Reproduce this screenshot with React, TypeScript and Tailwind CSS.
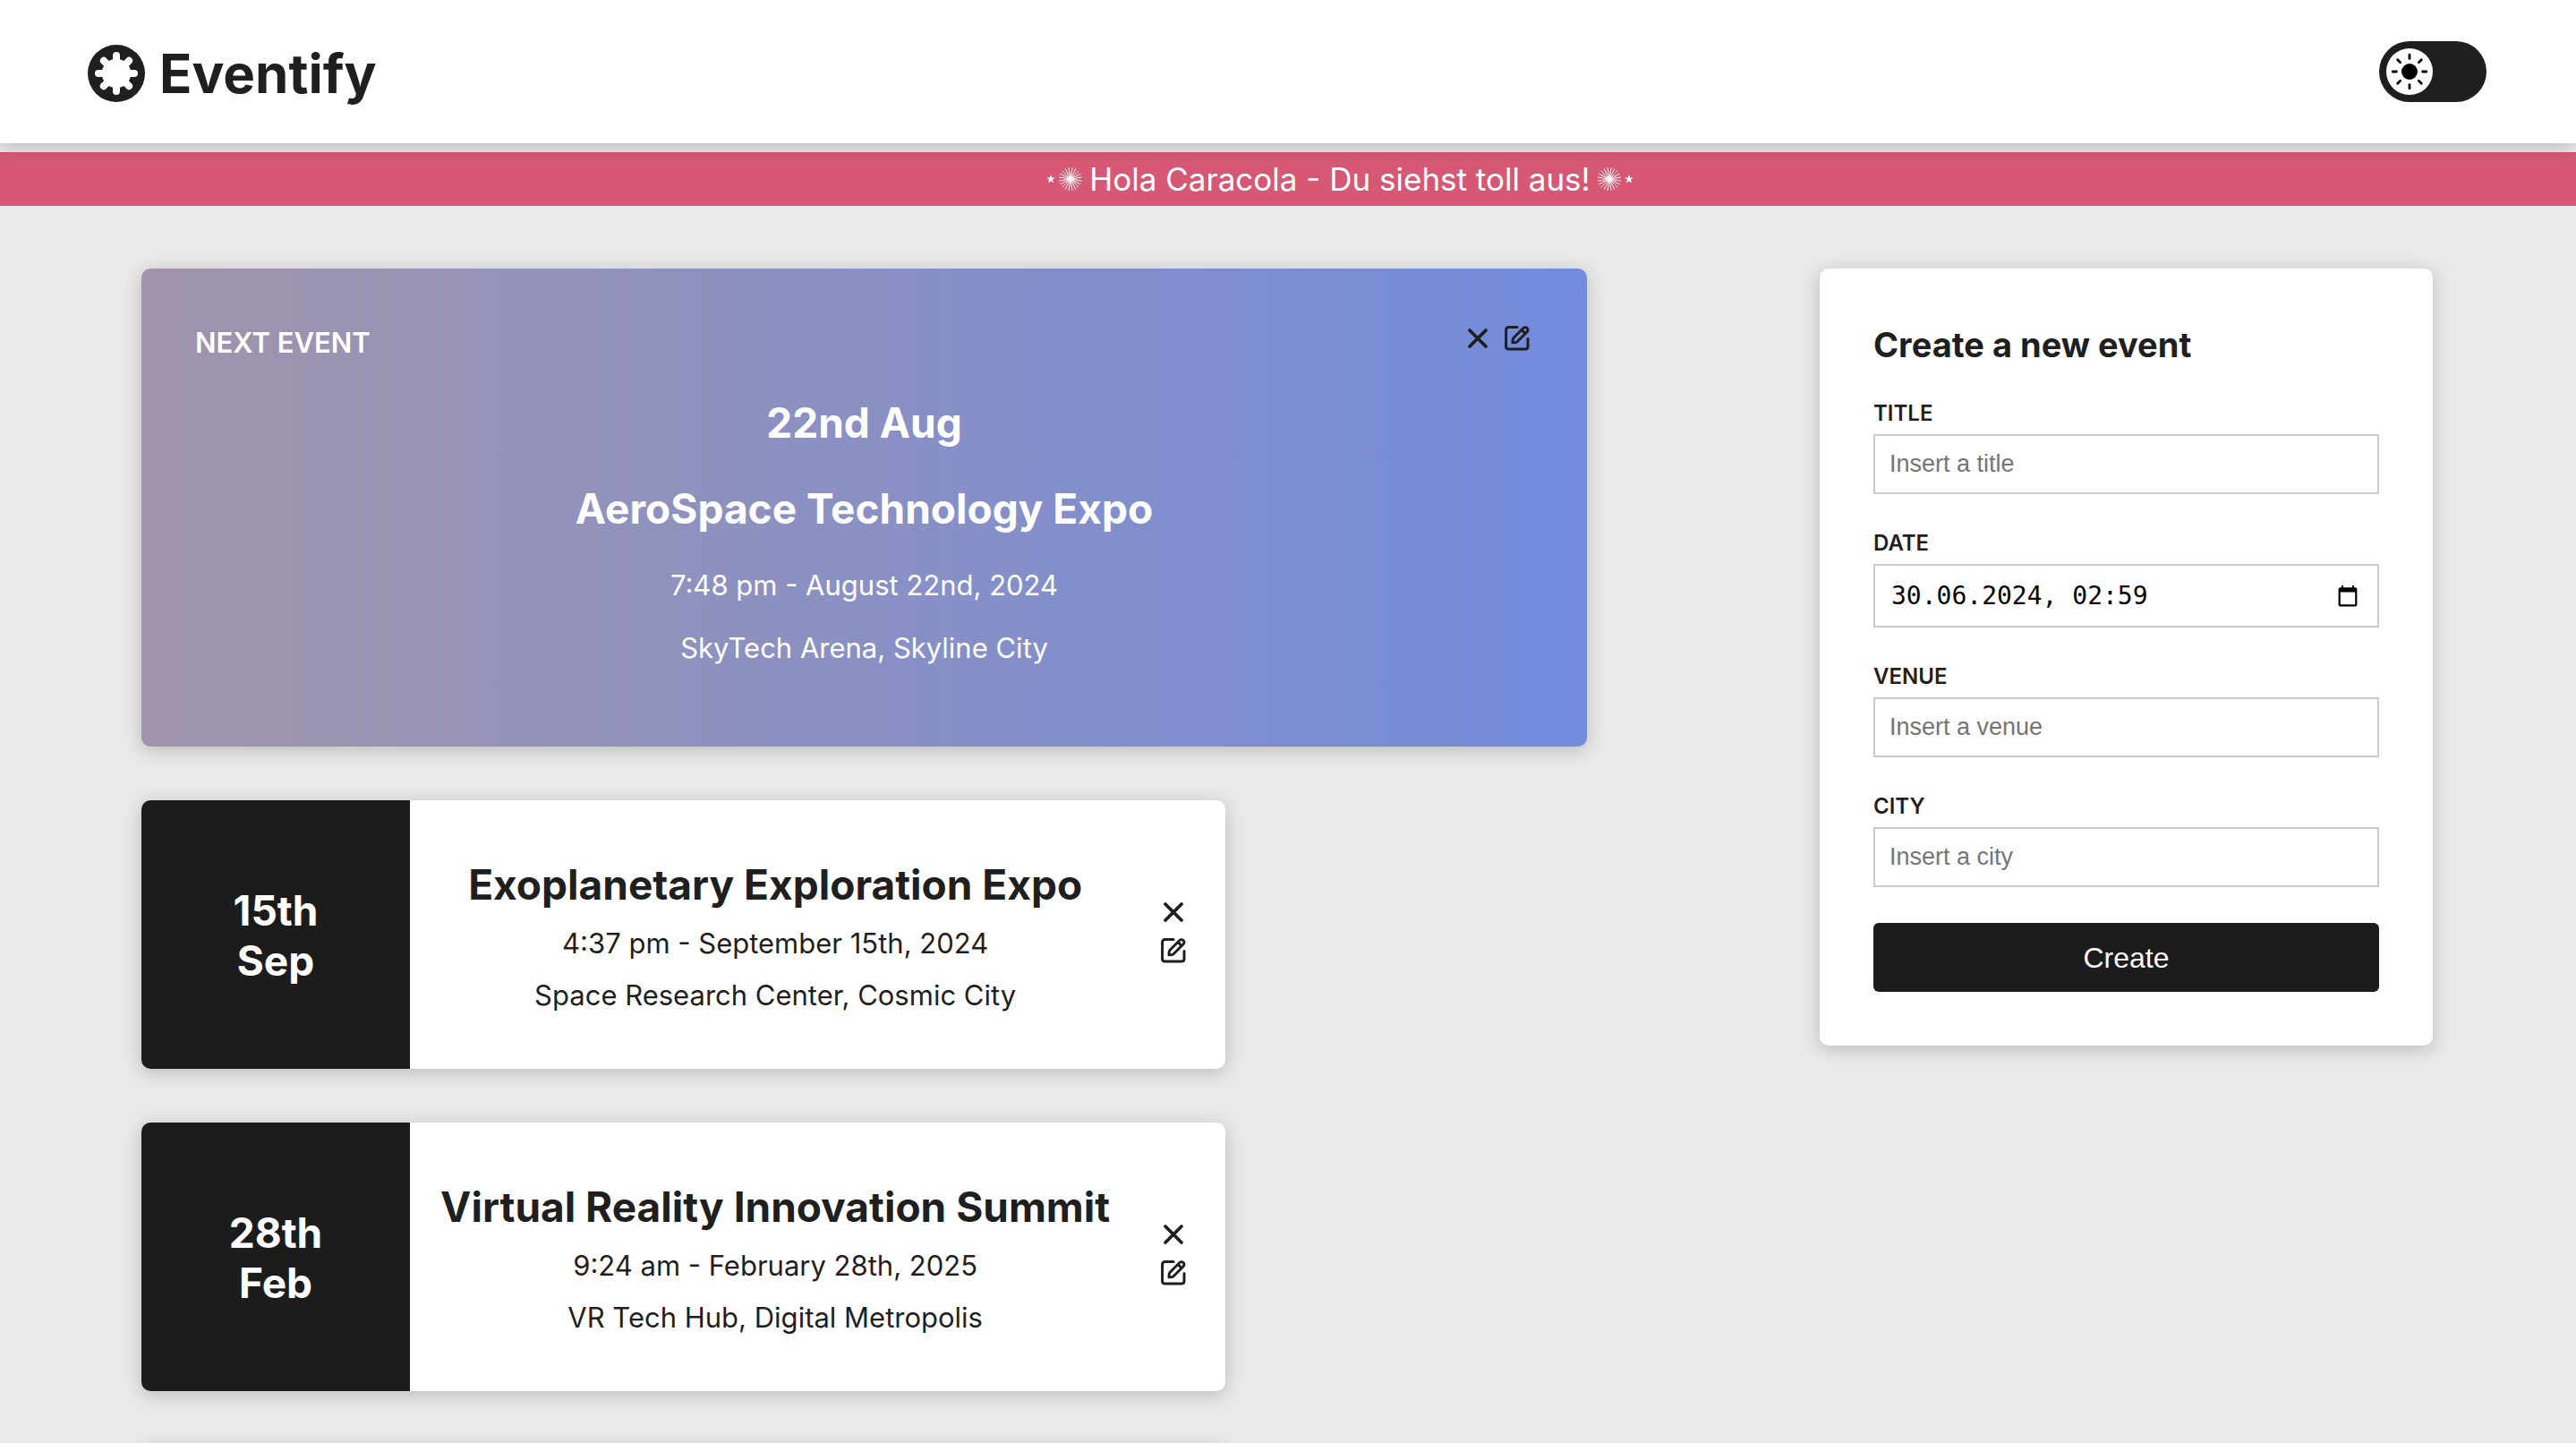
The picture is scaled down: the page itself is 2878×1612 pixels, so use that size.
import type { ReactNode } from "react";

type EventItem = {
  day: string;
  month: string;
  title: string;
  when: string;
  where: string;
};

const EVENTS: EventItem[] = [
  {
    day: "15th",
    month: "Sep",
    title: "Exoplanetary Exploration Expo",
    when: "4:37 pm - September 15th, 2024",
    where: "Space Research Center, Cosmic City",
  },
  {
    day: "28th",
    month: "Feb",
    title: "Virtual Reality Innovation Summit",
    when: "9:24 am - February 28th, 2025",
    where: "VR Tech Hub, Digital Metropolis",
  },
];

const RAYS_8 = [0, 45, 90, 135, 180, 225, 270, 315];
const RAYS_20 = Array.from({ length: 20 }, (_, i) => i * 18);

function LogoMark() {
  return (
    <svg viewBox="0 0 64 64" className="size-16 shrink-0" aria-hidden="true">
      <circle cx="32" cy="32" r="32" fill="#1f1f1f" />
      <circle cx="32" cy="32" r="16.2" fill="#fff" />
      {RAYS_8.map((a) => (
        <line
          key={a}
          x1="32"
          y1="32"
          x2="32"
          y2="12"
          stroke="#fff"
          strokeWidth="8"
          strokeLinecap="round"
          transform={`rotate(${a} 32 32)`}
        />
      ))}
    </svg>
  );
}

function SunIcon() {
  return (
    <svg viewBox="0 0 52 52" className="size-[52px]" aria-hidden="true">
      <circle cx="26" cy="26" r="26" fill="#fff" />
      <circle cx="26" cy="26" r="9" fill="#000" />
      {RAYS_8.map((a) => (
        <line
          key={a}
          x1="26"
          y1="11.4"
          x2="26"
          y2="7.2"
          stroke="#000"
          strokeWidth="2.8"
          strokeLinecap="round"
          transform={`rotate(${a} 26 26)`}
        />
      ))}
    </svg>
  );
}

function Burst() {
  return (
    <svg viewBox="0 0 26 26" className="size-[26px]" aria-hidden="true">
      <circle cx="13" cy="13" r="2.4" fill="#fff" />
      {RAYS_20.map((a) => (
        <line
          key={a}
          x1="13"
          y1="13"
          x2="13"
          y2="0"
          stroke="#fff"
          strokeWidth="0.9"
          transform={`rotate(${a + 9} 13 13)`}
        />
      ))}
    </svg>
  );
}

function Star() {
  return (
    <svg viewBox="0 0 10 10" className="size-[10px]" aria-hidden="true">
      <path
        d="M5 0 L6.2 3.5 L9.8 3.6 L6.9 5.8 L8 9.3 L5 7.2 L2 9.3 L3.1 5.8 L0.2 3.6 L3.8 3.5 Z"
        fill="#fff"
      />
    </svg>
  );
}

function CloseIcon() {
  return (
    <svg viewBox="0 0 36 36" className="size-9" aria-hidden="true">
      <path
        d="M9 9 L27 27 M27 9 L9 27"
        stroke="#1f1f1f"
        strokeWidth="3.8"
        strokeLinecap="round"
      />
    </svg>
  );
}

function EditIcon() {
  return (
    <svg viewBox="0 0 36 36" className="size-9" fill="none" aria-hidden="true">
      <g
        stroke="#1f1f1f"
        strokeWidth="3"
        strokeLinecap="round"
        strokeLinejoin="round"
      >
        <path d="M18 5.6 H8.6 Q5.6 5.6 5.6 8.6 V27 Q5.6 30 8.6 30 H27 Q30 30 30 27 V18.4" />
        <path d="M13 22.8 L13.2 19.4 Q13.3 18.2 14.2 17.3 L24.9 6.5 a2.9 2.9 0 0 1 4.2 4.2 L18.3 21.5 Q17.5 22.3 16.4 22.5 Z" />
        <path d="M23.2 8.6 L27 12.4" />
      </g>
    </svg>
  );
}

function CalendarIcon() {
  return (
    <svg viewBox="0 0 22 24" className="h-6 w-[22px]" aria-hidden="true">
      <path
        fill="#000"
        fillRule="evenodd"
        d="M4 0 H6 V2.2 H16 V0 H18 V2.2 H19.4 Q21.4 2.2 21.4 4.2 V21.4 Q21.4 23.4 19.4 23.4 H2.6 Q0.6 23.4 0.6 21.4 V4.2 Q0.6 2.2 2.6 2.2 H4 Z M2.8 7.6 V21.2 H19.2 V7.6 Z"
      />
    </svg>
  );
}

function EventActions() {
  return (
    <>
      <button type="button" aria-label="Delete event">
        <CloseIcon />
      </button>
      <button type="button" aria-label="Edit event">
        <EditIcon />
      </button>
    </>
  );
}

function Card({ className, children }: { className: string; children?: ReactNode }) {
  return (
    <div
      className={`overflow-hidden rounded-[10px] shadow-[0_4px_20px_rgba(0,0,0,0.2)] ${className}`}
    >
      {children}
    </div>
  );
}

function NextEvent() {
  return (
    <Card className="bg-linear-to-r from-[#a094ab] to-[#728bdc] px-[60px] pt-[60px] pb-[90px] text-white">
      <div className="flex items-start justify-between">
        <h2 className="pt-[2px] text-[31px] leading-[42px] font-semibold">NEXT EVENT</h2>
        <div className="flex gap-2">
          <EventActions />
        </div>
      </div>
      <div className="flex flex-col items-center text-center">
        <p className="mt-10 text-[46px] leading-[56px] font-bold">22nd Aug</p>
        <h3 className="mt-10 text-[46px] leading-[56px] font-bold">
          AeroSpace Technology Expo
        </h3>
        <p className="mt-[38px] text-[31px] leading-10">7:48 pm - August 22nd, 2024</p>
        <p className="mt-[30px] text-[31px] leading-10">SkyTech Arena, Skyline City</p>
      </div>
    </Card>
  );
}

function EventCard({ event }: { event: EventItem }) {
  return (
    <Card className="flex min-h-[300px] w-3/4 bg-white">
      <div className="flex w-[300px] shrink-0 flex-col items-center justify-center bg-[#1c1c1c] pt-[2px] text-[46px] leading-[56px] font-bold text-white">
        <span>{event.day}</span>
        <span>{event.month}</span>
      </div>
      <div className="flex grow flex-col items-center justify-center gap-[18px] pt-[3px] text-center">
        <h3 className="text-[46px] leading-[56px] font-bold">{event.title}</h3>
        <p className="text-[31px] leading-10">{event.when}</p>
        <p className="text-[31px] leading-10">{event.where}</p>
      </div>
      <div className="flex flex-col justify-center gap-[7px] pr-10 pb-[7px] pl-[19px]">
        <EventActions />
      </div>
    </Card>
  );
}

function TextField({ id, label, placeholder }: { id: string; label: string; placeholder: string }) {
  return (
    <div>
      <label htmlFor={id} className="mb-2 block text-[24px] leading-[31px] font-semibold">
        {label}
      </label>
      <input
        id={id}
        type="text"
        placeholder={placeholder}
        className="block h-[67px] w-full border-2 border-[#cacaca] bg-white px-4 font-['Liberation_Sans',sans-serif] text-[27px] placeholder:text-[#757575]"
      />
    </div>
  );
}

function DateField() {
  return (
    <div>
      <label htmlFor="date" className="mb-2 block text-[24px] leading-[31px] font-semibold">
        DATE
      </label>
      <div className="flex h-[71px] items-center border-2 border-[#cacaca] bg-white pr-[22px] pl-[18px]">
        <input
          id="date"
          type="text"
          defaultValue="30.06.2024, 02:59"
          className="min-w-0 grow font-['DejaVu_Sans_Mono',monospace] text-[28px] text-black outline-none"
        />
        <button type="button" aria-label="Open calendar">
          <CalendarIcon />
        </button>
      </div>
    </div>
  );
}

function CreateEventForm() {
  return (
    <Card className="self-start bg-white p-[60px]">
      <form>
        <h2 className="mb-9 text-[38px] leading-[50px] font-bold">Create a new event</h2>
        <div className="flex flex-col gap-[39px]">
          <TextField id="title" label="TITLE" placeholder="Insert a title" />
          <DateField />
          <TextField id="venue" label="VENUE" placeholder="Insert a venue" />
          <TextField id="city" label="CITY" placeholder="Insert a city" />
        </div>
        <button
          type="button"
          className="mt-10 h-[77px] w-full rounded-md bg-[#1c1c1c] font-['Liberation_Sans',sans-serif] text-[32px] text-white"
        >
          Create
        </button>
      </form>
    </Card>
  );
}

export default function App() {
  return (
    <div className="h-screen overflow-hidden bg-[#e9e9e9] font-['Inter',sans-serif] text-[#1f1f1f]">
      <header className="relative z-10 flex h-40 items-center justify-between bg-white pr-[100px] pl-[98px] shadow-[0_4px_20px_rgba(0,0,0,0.2)]">
        <a href="#" className="flex items-center gap-4 pt-1">
          <LogoMark />
          <h1 className="text-[60px] leading-[72px] font-bold">Eventify</h1>
        </a>
        <button
          type="button"
          role="switch"
          aria-checked="false"
          aria-label="Dark mode"
          className="flex h-[68px] w-[120px] items-center rounded-full bg-[#1f1f1f] pl-2"
        >
          <SunIcon />
        </button>
      </header>

      <div className="mt-[10px] flex h-[60px] items-center justify-center gap-2 bg-[#d65875] pl-[116px] text-white">
        <span className="flex items-center gap-1">
          <Star />
          <Burst />
        </span>
        <p className="text-[35px] leading-[44px]">Hola Caracola - Du siehst toll aus!</p>
        <span className="flex items-center gap-1">
          <Burst />
          <Star />
        </span>
      </div>

      <main className="grid grid-cols-[1615fr_685fr] gap-x-[260px] pt-[70px] pr-40 pl-[158px]">
        <section className="flex flex-col gap-[60px]">
          <NextEvent />
          {EVENTS.map((event) => (
            <EventCard key={event.title} event={event} />
          ))}
          <Card className="min-h-[300px] w-3/4 bg-white" />
        </section>
        <CreateEventForm />
      </main>
    </div>
  );
}
